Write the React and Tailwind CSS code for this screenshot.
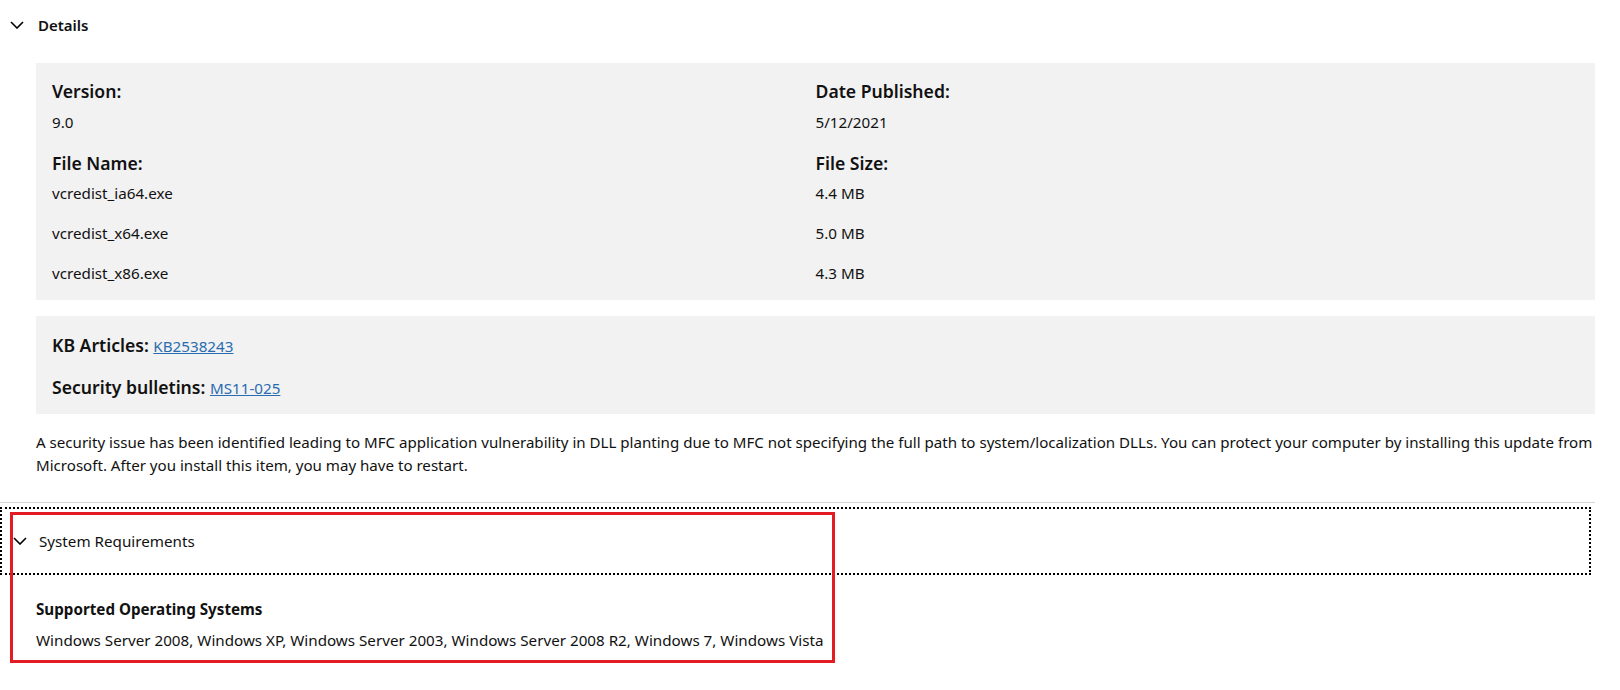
import React from "react";

const Chevron = () => (
  <svg width="14" height="8" viewBox="0 0 14 8" fill="none" className="shrink-0">
    <path d="M1 1l6 6 6-6" stroke="#000" strokeWidth="1.6" />
  </svg>
);

const font = { fontFamily: '"Noto Sans", "Open Sans", sans-serif' };

export default function App() {
  return (
    <div className="relative w-[1620px] h-[690px] bg-white text-[#111] overflow-hidden" style={font}>
      {/* Details header */}
      <div className="h-[50px] flex items-center pl-[10px] gap-[14px]">
        <Chevron />
        <span className="text-[15px] font-semibold">Details</span>
      </div>

      <div className="pl-[36px] pr-[25px]">
        <div className="mt-[13px] bg-[#f2f2f2] px-[16px] pt-[16px] pb-[14px] h-[237px]">
          <div className="grid grid-cols-2">
            <div>
              <div className="text-[17.6px] font-semibold leading-[24px]">Version:</div>
              <div className="text-[15.2px] leading-[24px] mt-[7px]">9.0</div>
              <div className="text-[17.6px] font-semibold leading-[24px] mt-[17px]">File Name:</div>
              <div className="text-[15.2px] leading-[24px] mt-[6px]">vcredist_ia64.exe</div>
              <div className="text-[15.2px] leading-[24px] mt-[16px]">vcredist_x64.exe</div>
              <div className="text-[15.2px] leading-[24px] mt-[16px]">vcredist_x86.exe</div>
            </div>
            <div>
              <div className="text-[17.6px] font-semibold leading-[24px]">Date Published:</div>
              <div className="text-[15.2px] leading-[24px] mt-[7px]">5/12/2021</div>
              <div className="text-[17.6px] font-semibold leading-[24px] mt-[17px]">File Size:</div>
              <div className="text-[15.2px] leading-[24px] mt-[6px]">4.4 MB</div>
              <div className="text-[15.2px] leading-[24px] mt-[16px]">5.0 MB</div>
              <div className="text-[15.2px] leading-[24px] mt-[16px]">4.3 MB</div>
            </div>
          </div>
        </div>

        <div className="mt-[16px] bg-[#f2f2f2] px-[16px] h-[98px] flex flex-col pt-[17px] gap-[17px]">
          <div className="leading-[24px]">
            <span className="text-[17.6px] font-semibold">KB Articles: </span>
            <a href="#" className="text-[15.2px] text-[#2a6cb0] underline">KB2538243</a>
          </div>
          <div className="leading-[24px]">
            <span className="text-[17.6px] font-semibold">Security bulletins: </span>
            <a href="#" className="text-[15.2px] text-[#2a6cb0] underline">MS11-025</a>
          </div>
        </div>

        <p className="mt-[17px] mr-[-8px] text-[15.1px] leading-[23px]">
          A security issue has been identified leading to MFC application vulnerability in DLL planting due to MFC not specifying the full path to system/localization DLLs. You can protect your computer by installing this update from Microsoft. After you install this item, you may have to restart.
        </p>
      </div>

      <div className="mt-[25px] w-[1595px] border-t border-[#d6d6d6]"></div>

      <div className="mt-[4px] w-[1591px] h-[68px] border-2 border-dotted border-black flex items-center pl-[11px] gap-[12px]">
        <Chevron />
        <span className="text-[15.2px]">System Requirements</span>
      </div>

      <div className="pl-[36px] pt-[22px]">
        <div className="text-[15.2px] font-bold leading-[24px]">Supported Operating Systems</div>
        <div className="text-[15.2px] leading-[24px] mt-[7px]">
          Windows Server 2008, Windows XP, Windows Server 2003, Windows Server 2008 R2, Windows 7, Windows Vista
        </div>
      </div>

      {/* annotation overlay */}
      <div className="absolute left-[10px] top-[512px] w-[825px] h-[151px] border-[3px] border-[#e31b23] pointer-events-none"></div>
    </div>
  );
}
